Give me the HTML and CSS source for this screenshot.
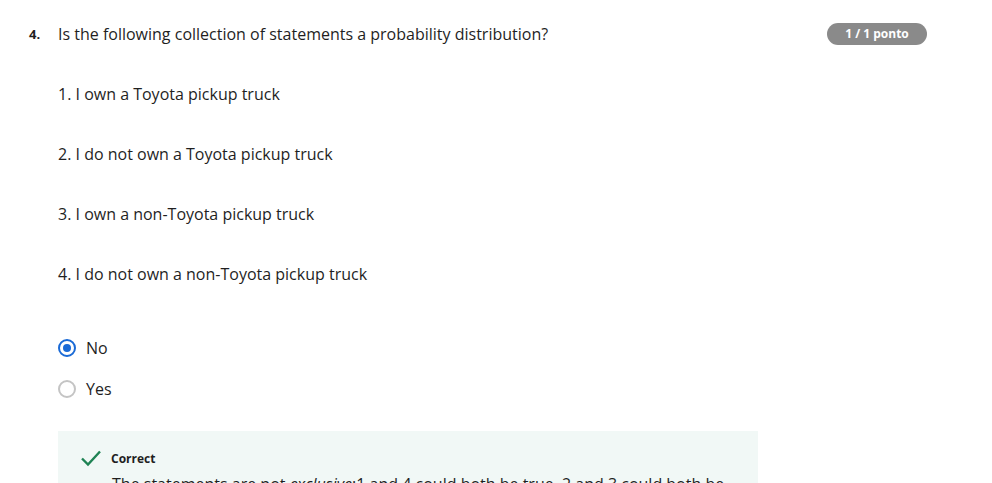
FILE: index.html
```html
<!DOCTYPE html>
<html>
<head>
<meta charset="utf-8">
<link rel="stylesheet" href="styles.css">
</head>
<body>
<div class="question">
  <div class="head">
    <span class="num">4.</span>
    <div class="qtext">Is the following collection of statements a probability distribution?</div>
    <span class="badge">1 / 1 ponto</span>
  </div>
  <div class="body">
    <p class="stmt">1. I own a Toyota pickup truck</p>
    <p class="stmt">2. I do not own a Toyota pickup truck</p>
    <p class="stmt">3. I own a non-Toyota pickup truck</p>
    <p class="stmt">4. I do not own a non-Toyota pickup truck</p>
    <div class="options">
      <label class="opt"><span class="radio checked"></span><span>No</span></label>
      <label class="opt"><span class="radio"></span><span>Yes</span></label>
    </div>
    <div class="feedback">
      <div class="fb-head">
        <svg class="check" width="22" height="18" viewBox="0 0 22 18"><path d="M2 9.5 L8 15.5 L20 2.5" fill="none" stroke="#1f8354" stroke-width="2.4"/></svg>
        <span class="fb-title">Correct</span>
      </div>
      <p class="fb-text">The statements are not <em>exclusive</em>:1 and 4 could both be true, 2 and 3 could both be true.</p>
    </div>
  </div>
</div>
</body>
</html>
```
FILE: styles.css
```css
html, body {
  margin: 0;
  padding: 0;
  background: #fff;
}
body {
  font-family: "Open Sans", "Liberation Sans", sans-serif;
  color: #1f1f1f;
  overflow: hidden;
}
.question {
  padding: 22px 65px 0 29px;
}
.head {
  display: flex;
  align-items: center;
}
.num {
  font-size: 13px;
  font-weight: 700;
  width: 29px;
  flex: none;
  line-height: 24px;
}
.qtext {
  flex: 1;
  font-size: 16px;
  line-height: 24px;
}
.badge {
  flex: none;
  background: #8a8a8a;
  color: #fff;
  font-size: 12px;
  font-weight: 700;
  border-radius: 11px;
  height: 22px;
  line-height: 22px;
  width: 100px;
  text-align: center;
}
.body {
  padding-left: 29px;
  padding-top: 36px;
}
.stmt {
  margin: 0 0 36px;
  font-size: 16px;
  line-height: 24px;
}
.options {
  display: flex;
  flex-direction: column;
  gap: 17px;
  margin-top: 50px;
}
.opt {
  display: flex;
  align-items: center;
  gap: 10px;
  font-size: 16px;
  line-height: 24px;
}
.radio {
  width: 18px;
  height: 18px;
  box-sizing: border-box;
  border: 2px solid #c4c4c4;
  border-radius: 50%;
  flex: none;
  position: relative;
}
.radio.checked {
  border-color: #1a6ad6;
}
.radio.checked::after {
  content: "";
  position: absolute;
  left: 3px;
  top: 3px;
  width: 8px;
  height: 8px;
  border-radius: 50%;
  background: #1a6ad6;
}
.feedback {
  margin-top: 30px;
  width: 700px;
  background: #f1f8f6;
  padding: 18px 0 10px 22px;
  box-sizing: border-box;
}
.fb-head {
  display: flex;
  align-items: center;
  gap: 9px;
}
.fb-title {
  font-size: 12px;
  font-weight: 700;
}
.fb-text {
  margin: 5px 0 0 32px;
  font-size: 16px;
  line-height: 24px;
}
```
